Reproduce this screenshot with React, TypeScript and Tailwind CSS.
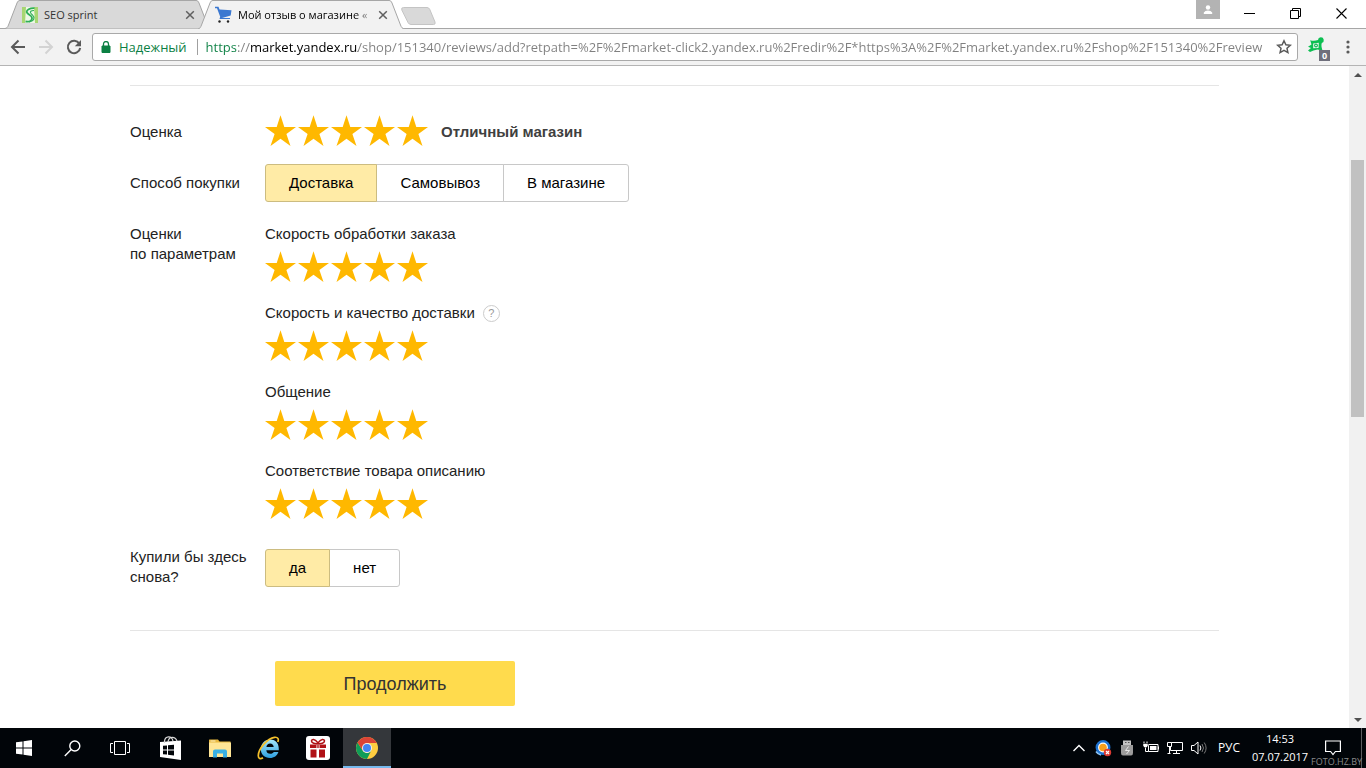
import React, { useState } from 'react';

const pageUrl = 'https://market.yandex.ru/shop/151340/reviews/add?retpath=%2F%2Fmarket-click2.yandex.ru%2Fredir%2F*https%3A%2F%2Fmarket.yandex.ru%2Fshop%2F151340%2Freview';

const params = [
  { id: 'speed', title: 'Скорость обработки заказа', hint: false },
  { id: 'delivery', title: 'Скорость и качество доставки', hint: true },
  { id: 'contact', title: 'Общение', hint: false },
  { id: 'match', title: 'Соответствие товара описанию', hint: false }
];

const CloseIcon: React.FC = () => <svg width="10" height="10" viewBox="0 0 10 10" stroke="#5f5f5f" strokeWidth="1.500">
    <path d="M1.200 1.200l7.600 7.600M8.800 1.200l-7.600 7.600" />
  </svg>;

interface TabProps {
  title: string;
  active?: boolean;
  icon: React.ReactNode;
}
const BrowserTab: React.FC<TabProps> = ({ title, active, icon }) => {
  return <div className={`relative flex h-[29px] w-[207px] items-center pr-[14px] pl-[17px] ${active ? 'z-10 -ml-[14px]' : ''}`}>
      <svg className="absolute inset-0 h-full w-full" viewBox="0 0 207 29" preserveAspectRatio="none">
        <path d={active ? 'M0 29 C2 28.500 2.500 27.500 3.500 25 L12 3 C12.800 1.200 13.500 .5 15 .5 H191 C192.500 .5 193.200 1.200 194 3 L202.500 25 C203.500 27.500 204 28.500 207 29' : 'M0 28.500 C2 28 2.500 27.500 3.500 25 L12 3 C12.800 1.200 13.500 .5 15 .5 H191 C192.500 .5 193.200 1.200 194 3 L202.500 25 C203.500 27.500 204 28 207 28.500'} fill={active ? '#f2f2f2' : '#d9d9d9'} stroke="#a6a6a6" />
      </svg>
      <button className="relative flex min-w-0 flex-1 items-center gap-[6px] text-left">
        {icon}
        <span className={`min-w-0 flex-1 text-[11px] leading-4 whitespace-nowrap ${active ? 'mask-r-from-85% text-black' : 'text-[#333333]'}`}>{title}</span>
      </button>
      <button className="relative flex h-4 w-4 items-center justify-center" aria-label="Закрыть вкладку"><CloseIcon /></button>
    </div>;
};

const SprintIcon: React.FC = () => <svg width="16" height="16" viewBox="0 0 16 16" className="shrink-0">
    <path d="M0 0h16v16H0z" fill="#a8d672" />
    <path d="M4 0h8l1 16H3z" fill="#eef8e6" />
    <path d="M12.500 1.200C8 .8 4.200 3 4.800 5.300s5.700 3 5.200 6-3.300 3.700-6.500 3.200" fill="none" stroke="#2fae57" strokeWidth="1.800" />
    <path d="M12 3.500C9 3.500 7.500 4.500 9 6.500s3.800 2.500 2.800 5.500-3 2.500-5 3" fill="none" stroke="#2fae57" strokeWidth="1.100" />
  </svg>;

const CartIcon: React.FC = () => <svg width="17" height="17" viewBox="0 0 17 17" className="shrink-0">
    <path d="M0 .8h3.500l1 2.700 12 .8-.8 5.200L7 12h8v1H4.500L5.200 10.800 2 2.200H0z" fill="#3b78d1" />
    <circle cx="4.500" cy="15.500" r="1.200" fill="#222" />
    <circle cx="13" cy="15.500" r="1.200" fill="#222" />
  </svg>;

const TitleBar: React.FC = () => <div className="flex h-7 items-start bg-white">
    <div className="flex pl-[5px]">
      <BrowserTab title="SEO sprint" icon={<SprintIcon />} />
      <BrowserTab title="Мой отзыв о магазине «" active icon={<CartIcon />} />
    </div>
    <button className="-ml-1 pt-[7px]" aria-label="Новая вкладка">
      <svg width="35" height="18" viewBox="0 0 35 18">
        <path d="M2.500 .5H26q2 0 2.800 2L34 15q.8 2.500-1.500 2.500H10q-2 0-3-2L.8 3Q0 .5 2.500 .5z" fill="#d9d9d9" stroke="#c4c4c4" />
      </svg>
    </button>
    <div className="ml-auto flex pr-[2px]">
      <button className="mr-[6px] flex h-[19px] w-6 items-center justify-center bg-[#b3b3b3]" aria-label="Профиль">
        <svg width="10" height="10" viewBox="0 0 10 10" fill="#fff">
          <circle cx="5" cy="2.500" r="2.200" />
          <path d="M.8 9V7.500Q2 5.600 5 5.600T9.200 7.500V9z" />
        </svg>
      </button>
      <button className="flex h-[27px] w-[46px] items-center justify-center" aria-label="Свернуть">
        <svg width="11" height="11" viewBox="0 0 11 11"><path d="M0 5.500h11" stroke="#000" /></svg>
      </button>
      <button className="flex h-[27px] w-[46px] items-center justify-center" aria-label="Восстановить">
        <svg width="11" height="11" viewBox="0 0 11 11" fill="none" stroke="#000"><path d="M.5 2.500h8v8h-8zM2.500 2.500v-2h8v8h-2" /></svg>
      </button>
      <button className="flex h-[27px] w-[46px] items-center justify-center" aria-label="Закрыть">
        <svg width="11" height="11" viewBox="0 0 11 11" stroke="#000" strokeWidth="1.100"><path d="M.5 .5l10 10M10.500 .5l-10 10" /></svg>
      </button>
    </div>
  </div>;

const Toolbar: React.FC = () => <div className="flex items-center border-t border-b border-t-[#a6a6a6] border-b-[#b4b4b4] bg-[#f2f2f2] py-1 pl-1">
    <button className="flex h-7 w-7 items-center justify-center" aria-label="Назад">
      <svg width="16" height="16" viewBox="0 0 16 16" fill="none" stroke="#5a5a5a" strokeWidth="2"><path d="M15 8H2.500M8.500 1.500L2 8l6.500 6.500" /></svg>
    </button>
    <button className="flex h-7 w-7 items-center justify-center" aria-label="Вперёд">
      <svg width="16" height="16" viewBox="0 0 16 16" fill="none" stroke="#d3d3d3" strokeWidth="2"><path d="M1 8h12.500M7.500 1.500L14 8l-6.500 6.500" /></svg>
    </button>
    <button className="flex h-7 w-7 items-center justify-center" aria-label="Обновить">
      <svg width="16" height="16" viewBox="0 0 16 16"><path d="M13.300 4.600A6.200 6.200 0 1 0 14.200 9" fill="none" stroke="#5a5a5a" strokeWidth="2" /><path d="M15 1v6.200H8.800z" fill="#5a5a5a" /></svg>
    </button>
    <div className="ml-1 flex h-7 min-w-0 flex-1 items-center rounded-[3px] border border-[#a9a9a9] bg-white pr-[5px] pl-2">
      <svg width="10" height="12" viewBox="0 0 10 12"><path d="M1 5h8v6.500H1z" fill="#0b8043" stroke="#0b8043" strokeLinejoin="round" /><path d="M2.500 5V3a2.500 2.500 0 0 1 5 0v2" fill="none" stroke="#0b8043" strokeWidth="1.300" /></svg>
      <span className="ml-2 text-[13px] leading-5 text-[#0b8043]">Надежный</span>
      <span className="ml-[10px] h-4 w-px bg-[#a0a0a0]" />
      <input aria-label="Адрес" defaultValue={pageUrl} className="ml-2 h-6 min-w-0 flex-1 bg-[linear-gradient(90deg,#0b8043_31px,#808080_31px,#808080_45px,#000_45px,#000_152px,#808080_152px)] bg-clip-text text-[13px] text-transparent caret-black outline-none" />
      <button className="ml-[7px] flex h-5 w-4 items-center justify-center" aria-label="Добавить в закладки">
        <svg width="16" height="16" viewBox="0 0 16 16"><path d="M8 1.800l1.900 4 4.400.5-3.300 3 .9 4.300L8 11.400l-3.900 2.200.9-4.300-3.300-3 4.400-.5z" fill="none" stroke="#5a5a5a" strokeWidth="1.500" /></svg>
      </button>
    </div>
    <button className="relative ml-2 flex h-7 w-6 items-center justify-start" aria-label="Расширение">
      <svg width="18" height="18" viewBox="0 0 18 18" className="-mt-1 ml-px">
        <path d="M3.200 4.200Q7 5.500 11 4A2.900 2.900 0 1 1 14.800 7Q13.800 9.500 15.500 14.500L10.500 13.500 6.500 14.500 3 16 1 14.500 4 12 1 10.800 4.500 8.500z" fill="#0dbf52" />
        <path d="M6.200 7.500l5.600-.7-.3 5.200-5.300.3z" fill="#f2f2f2" />
        <circle cx="9" cy="9.500" r="1.900" fill="#0dbf52" /><circle cx="9" cy="9.500" r=".8" fill="#fff" />
      </svg>
      <span className="absolute right-0 bottom-0 flex h-[11px] w-[11px] items-center justify-center bg-[#6f6f7c] text-[9px] leading-none font-bold text-white">0</span>
    </button>
    <button className="mr-1 ml-1 flex h-7 w-7 items-center justify-center" aria-label="Меню">
      <svg width="4" height="14" viewBox="0 0 4 14" fill="#5a5a5a"><circle cx="2" cy="2" r="1.600" /><circle cx="2" cy="7" r="1.600" /><circle cx="2" cy="12" r="1.600" /></svg>
    </button>
  </div>;

const StarRating: React.FC<{ name: string; label: string }> = ({ name, label }) => {
  const [value, setValue] = useState(5);
  return <div role="radiogroup" aria-label={label} className="flex gap-[2px]">
      {[1, 2, 3, 4, 5].map(n => <label key={n} className="relative block cursor-pointer">
          <input type="radio" name={name} aria-label={`${n} из 5`} checked={value === n} onChange={() => setValue(n)} className="absolute inset-0 appearance-none" />
          <svg width="31" height="33" viewBox="0 0 31 33">
            <path d="M15.500 .3l3.800 11.700H31l-9.600 7.100L25.500 31l-10-7.300L5.500 31l4.100-11.900L0 12h11.700z" fill={n <= value ? '#ffb800' : '#dddddd'} />
          </svg>
        </label>)}
    </div>;
};

const Segmented: React.FC<{ name: string; label: string; options: string[] }> = ({ name, label, options }) => {
  const [selected, setSelected] = useState(options[0]);
  return <div role="radiogroup" aria-label={label} className="flex">
      {options.map(option => <label key={option} className={`relative -mr-px flex h-[38px] cursor-pointer items-center border px-[23px] text-[15px] text-black first:rounded-l-[3px] last:rounded-r-[3px] ${selected === option ? 'z-10 border-[#ccbc80] bg-[#ffeba6]' : 'border-[#c8c8c8] bg-white'}`}>
          <input type="radio" name={name} checked={selected === option} onChange={() => setSelected(option)} className="absolute inset-0 appearance-none" />
          <span className="relative">{option}</span>
        </label>)}
    </div>;
};

const ReviewForm: React.FC = () => <form className="min-w-0 flex-1 overflow-hidden bg-white px-[130px] pt-[19px] font-['Liberation_Sans',Arial,sans-serif] text-[15px] leading-5 text-[#222222]" onSubmit={e => e.preventDefault()}>
    <div className="border-t border-b border-[#e5e5e5] pt-[29px] pb-[43px]">
      <div className="flex items-center">
        <div className="w-[135px]">Оценка</div>
        <StarRating name="total" label="Оценка" />
        <b className="ml-[13px] text-[#404040]">Отличный магазин</b>
      </div>
      <div className="mt-4 flex items-center">
        <div className="w-[135px]">Способ покупки</div>
        <Segmented name="method" label="Способ покупки" options={['Доставка', 'Самовывоз', 'В магазине']} />
      </div>
      <div className="mt-[22px] flex">
        <div className="w-[135px]">Оценки<br />по параметрам</div>
        <div className="flex flex-col gap-[19px]">
          {params.map(param => <div key={param.id} className="flex flex-col gap-[7px]">
              <div className="flex items-center gap-2">
                {param.title}
                {param.hint && <button type="button" className="flex h-[17px] w-[17px] items-center justify-center rounded-full border border-[#cccccc] text-[11px] leading-none text-[#999999]">?</button>}
              </div>
              <StarRating name={param.id} label={param.title} />
            </div>)}
        </div>
      </div>
      <div className="mt-[26px] flex items-end">
        <div className="w-[135px]">Купили бы здесь<br />снова?</div>
        <Segmented name="again" label="Купили бы здесь снова?" options={['да', 'нет']} />
      </div>
    </div>
    <button type="submit" className="mt-[30px] ml-[145px] h-[45px] w-60 rounded-[2px] bg-[#ffdb4d] text-lg text-[#333333]">Продолжить</button>
  </form>;

const ScrollBar: React.FC = () => <div className="flex w-[17px] shrink-0 flex-col bg-[#f1f1f1]">
    <button className="flex h-[17px] items-center justify-center" aria-label="Вверх">
      <svg width="8" height="4" viewBox="0 0 8 4"><path d="M0 4l4-4 4 4z" fill="#505050" /></svg>
    </button>
    <div className="flex flex-1 flex-col px-[2px]">
      <div className="grow-[77]" />
      <div className="grow-[257] bg-[#c1c1c1]" />
      <div className="grow-[294]" />
    </div>
    <button className="flex h-[17px] items-center justify-center" aria-label="Вниз">
      <svg width="8" height="4" viewBox="0 0 8 4"><path d="M0 0l4 4 4-4z" fill="#505050" /></svg>
    </button>
  </div>;

const TaskButton: React.FC<{ label: string; active?: boolean; children: React.ReactNode }> = ({ label, active, children }) => <button aria-label={label} className={`flex h-10 w-12 items-center justify-center ${active ? 'border-b-2 border-[#76b9ed] bg-[#34373b] pt-[2px]' : ''}`}>{children}</button>;

const TrayIcon: React.FC<{ label: string; children: React.ReactNode }> = ({ label, children }) => <button aria-label={label} className="flex h-10 w-6 items-center justify-center">
    <svg width="18" height="18" viewBox="0 0 18 18" fill="none" stroke="#fff">{children}</svg>
  </button>;

const Taskbar: React.FC = () => <div className="relative flex h-10 shrink-0 bg-[#010509] text-white">
    <TaskButton label="Пуск">
      <svg width="16" height="16" viewBox="0 0 16 16" fill="#fff"><path d="M0 2.300L6.500 1.400V7.500H0zM7.500 1.200L16 0v7.500H7.500zM0 8.500h6.500v6.100L0 13.700zM7.500 8.500H16V16l-8.500-1.200z" /></svg>
    </TaskButton>
    <TaskButton label="Поиск">
      <svg width="17" height="17" viewBox="0 0 17 17" fill="none" stroke="#fff" strokeWidth="1.400"><circle cx="10.800" cy="6" r="5" /><path d="M7.200 9.600L.8 16" /></svg>
    </TaskButton>
    <TaskButton label="Представление задач">
      <svg width="20" height="14" viewBox="0 0 20 14" fill="none" stroke="#fff"><path d="M4.500 .5h11v13h-11zM3 2.500H.5v9H3M17 2.500h2.500v9H17" /></svg>
    </TaskButton>
    <div className="ml-[3px] flex gap-px">
      <TaskButton label="Магазин">
        <svg width="22" height="24" viewBox="0 0 22 24">
          <path d="M0 6L21 4.500V24L0 21z" fill="#fff" />
          <path d="M4.500 7V5Q5 1 8.500 .8T13 5M8 6Q8.500 1.500 12 1.300T17 5" fill="none" stroke="#d8d8d8" strokeWidth="1.200" />
          <path d="M3 9.800l4-.4v4.200H3zM8 9.300l6-.6v4.900H8zM3 14.500h4v4.100l-4-.4zM8 14.500h6v4.900l-6-.7z" fill="#010509" />
        </svg>
      </TaskButton>
      <TaskButton label="Проводник">
        <svg width="22" height="19" viewBox="0 0 22 19">
          <path d="M0 1Q0 .5.500 .5H9l1.500 2H21.500V18H0z" fill="#e8b83f" />
          <path d="M0 3.500h22V18H0z" fill="#ffe696" /><path d="M1.500 1.500h5v1h-5z" fill="#fff3c4" />
          <path d="M4 18.500v-6q0-2 2-2h10q2 0 2 2v6h-4v-4H8v4z" fill="#38b0e4" />
        </svg>
      </TaskButton>
      <TaskButton label="Internet Explorer">
        <svg width="24" height="24" viewBox="0 0 24 24">
          <defs>
            <linearGradient id="ie" x1="0" y1="0" x2="0" y2="1"><stop offset="0" stopColor="#a6e8fb" /><stop offset="1" stopColor="#2d9fe0" /></linearGradient>
          </defs>
          <path d="M13.200 3.500C19 3.500 22.300 8 21.800 14.200H9.300C9.500 16.500 11 17.800 13.300 17.800c1.700 0 2.700-.7 3.500-1.800h4.600C20.200 19.800 17 22 13 22 7.500 22 3.800 18.300 3.800 13S7.800 3.500 13.200 3.500zM9.400 11h7.300C16.500 8.800 15.200 7.500 13.100 7.500S9.700 8.900 9.400 11z" fill="url(#ie)" />
          <path d="M6 21.800C3.500 23.500 1.200 22.800 1.300 19.500 1.500 13 10 2.500 17.500 1.300 21 .8 22 3 20.800 6" fill="none" stroke="#f4c02b" strokeWidth="1.700" />
        </svg>
      </TaskButton>
      <TaskButton label="Подарки">
        <svg width="24" height="24" viewBox="0 0 24 24">
          <rect width="24" height="24" rx="3" fill="#fff" />
          <path d="M4 8.500h16V12H4zM4.500 13.500h6v8h-6zM13 13.500h6v8h-6z" fill="#b01116" />
          <path d="M10.500 8.500h.8V12h-.8zM12.700 8.500h.8V12h-.8z" fill="#fff" />
          <path d="M12 7.500C9 8 5.500 7 5.500 5s3.500-2.500 6.500 2c3-4.500 6.500-4 6.500-2s-3.500 3-6.500 2.500z" fill="none" stroke="#b01116" strokeWidth="1.500" />
        </svg>
      </TaskButton>
      <TaskButton label="Google Chrome" active>
        <svg width="22" height="22" viewBox="0 0 22 22">
          <circle cx="11" cy="11" r="11" fill="#ffcd40" />
          <path d="M1.500 5.500A11 11 0 0 0 11 22l4.300-8.500A5 5 0 0 1 6.700 13.500z" fill="#0f9d58" />
          <path d="M11 6h9.800l-.3-.5A11 11 0 0 0 1.500 5.500L6.700 13.500z" fill="#db4437" />
          <circle cx="11" cy="11" r="5" fill="#f1f1f1" /><circle cx="11" cy="11" r="4" fill="#4285f4" />
        </svg>
      </TaskButton>
    </div>
    <div className="ml-auto flex items-center">
      <TrayIcon label="Скрытые значки"><path d="M3.500 12L9 6.500l5.500 5.500" strokeWidth="1.400" /></TrayIcon>
      <TrayIcon label="Защита">
        <circle cx="9" cy="8.500" r="6.200" fill="#fff" stroke="#1e73d2" strokeWidth="2.500" />
        <path d="M2 12.500a8 8 0 0 0 5 3.500" stroke="#8cc4f7" strokeWidth="1.500" />
        <circle cx="9" cy="8.500" r="3.800" fill="#f8a01c" stroke="none" />
        <circle cx="13.500" cy="13.500" r="3.700" fill="#dc3a32" stroke="none" />
        <path d="M12 12l3 3m0-3l-3 3" strokeWidth="1.200" />
      </TrayIcon>
      <TrayIcon label="USB">
        <path d="M5 1.500h8v5H5z" fill="#c4c4c4" stroke="none" /><path d="M7 3.500h1.500M10 3.500h1.500" stroke="#555" />
        <path d="M3 6h12v8q0 2.500-2 2.500H5q-2 0-2-2.500z" fill="#9c9c9c" stroke="none" />
        <path d="M10.500 7.500l-3 4h4l-3 3.500" stroke="#e8e8e8" />
      </TrayIcon>
      <TrayIcon label="Батарея">
        <path d="M6.500 5.500h9.500v7H6.500zM16.500 7.500v3" /><path d="M8 7h6.500v4H8z" fill="#fff" stroke="none" />
        <path d="M2 2.500v2M5 2.500v2" /><path d="M1 4.500h5v2.500L4.500 8.500h-2L1 7z" fill="#fff" stroke="#010509" strokeWidth=".5" /><path d="M3.500 8.500v4h3" />
      </TrayIcon>
      <TrayIcon label="Сеть">
        <path d="M4.500 3.500h12v8h-12zM10.500 11.500v3M7 14.500h7" /><path d="M1.500 3.500h4v4h-4z" fill="#010509" /><path d="M3.500 7.500v7M1.500 14.500h3" />
      </TrayIcon>
      <TrayIcon label="Громкость">
        <path d="M1.500 6.500h2.500l4-3.500v12l-4-3.500H1.500z" /><path d="M10 6.500q1.800 2.500 0 5" /><path d="M12 5q3 4 0 8M14.200 3.500q3.800 5.500 0 11" stroke="#777" />
      </TrayIcon>
      <button className="w-9 text-xs">РУС</button>
      <button className="w-[66px] text-center text-[11px] leading-[18px]">14:53<br />07.07.2017</button>
      <button className="flex h-10 w-10 items-center justify-center" aria-label="Уведомления">
        <svg width="16" height="16" viewBox="0 0 16 16" fill="none" stroke="#fff" strokeWidth="1.200"><path d="M.6 1h14.800v10.500h-5L8 14.500 5.600 11.500h-5z" /></svg>
      </button>
      <span className="mr-1 ml-2 h-10 w-px bg-[#5b5d60]" />
    </div>
    <span className="absolute right-1 bottom-[2px] text-[9px] leading-none text-[#8a8a8a]">FOTO.HZ.BY</span>
  </div>;

export default function App() {
  return <div className="flex h-screen flex-col overflow-hidden font-['Open_Sans','Noto_Sans',sans-serif]">
      <header className="shrink-0">
        <TitleBar />
        <Toolbar />
      </header>
      <main className="flex min-h-0 flex-1">
        <ReviewForm />
        <ScrollBar />
      </main>
      <Taskbar />
    </div>;
}
